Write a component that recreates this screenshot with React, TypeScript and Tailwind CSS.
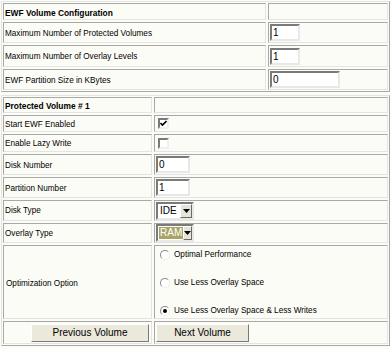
import React from 'react';

const cell = 'border border-t-[#a8a8a8] border-l-[#a8a8a8] border-b-[#e4e4e4] border-r-[#e4e4e4]';
const label = 'flex items-center pl-[1px] pt-[3px]';

const TextBox = ({ value, w }: { value: string; w: string }) => (
  <div
    className={`${w} h-[17px] bg-white border-2 border-t-[#7a7a7a] border-l-[#7a7a7a] border-b-[#e8e8e8] border-r-[#e8e8e8] flex items-center pl-[1px] text-[10px]`}
  >
    {value}
  </div>
);

const Select = ({ value, highlight }: { value: string; highlight?: boolean }) => (
  <div className="w-[38px] h-[18px] bg-white border-2 border-t-[#7a7a7a] border-l-[#7a7a7a] border-b-[#e8e8e8] border-r-[#e8e8e8] flex items-stretch">
    <div className="flex-1 flex items-center pl-[1px]">
      <span className={`text-[10px] leading-[12px] px-[1px] ${highlight ? 'bg-[#a9a465] text-white' : ''}`}>{value}</span>
    </div>
    <div className="w-[12px] bg-[#e6e3da] border border-t-white border-l-white border-b-[#6a6a6a] border-r-[#6a6a6a] flex items-center justify-center">
      <svg width="7" height="4" viewBox="0 0 7 4">
        <path d="M0 0 H7 L3.5 4 Z" fill="#000" />
      </svg>
    </div>
  </div>
);

const Radio = ({ checked }: { checked?: boolean }) => (
  <div className="w-[10px] h-[10px] rounded-full bg-white border border-t-[#8a8a8a] border-l-[#8a8a8a] border-b-[#ececec] border-r-[#ececec] flex items-center justify-center">
    {checked && <div className="w-[4px] h-[4px] rounded-full bg-black" />}
  </div>
);

const Check = ({ checked }: { checked?: boolean }) => (
  <div className="w-[11px] h-[11px] bg-white border-2 border-t-[#7a7a7a] border-l-[#7a7a7a] border-b-[#f0f0f0] border-r-[#f0f0f0] flex items-center justify-center">
    {checked && (
      <svg width="7" height="7" viewBox="0 0 7 7">
        <path d="M0.5 3 L2.5 5 L6.5 1" stroke="#000" strokeWidth="1.6" fill="none" />
      </svg>
    )}
  </div>
);

const Btn = ({ label, w }: { label: string; w: string }) => (
  <div
    className={`${w} h-[18px] bg-[#ebe8dc] border border-t-white border-l-white border-b-[#7a7a7a] border-r-[#7a7a7a] flex items-center justify-center text-[10px]`}
  >
    {label}
  </div>
);

export default function App() {
  return (
    <div className="w-[391px] h-[349px] bg-[#fcfcf7] font-['Liberation_Sans',Arial,sans-serif] text-[8.2px] text-black overflow-hidden pt-[1px] px-[1px]">
      {/* EWF Volume Configuration */}
      <div className="border border-t-[#e4e4e4] border-l-[#e4e4e4] border-b-[#a8a8a8] border-r-[#a8a8a8] grid grid-cols-[263px_1fr] gap-[2px] p-[1px]">
        <div className={`${cell} h-[17px] flex items-center pl-[1px] pt-[4px] font-bold text-[8.4px]`}>EWF Volume Configuration</div>
        <div className={`${cell} h-[17px]`} />
        <div className={`${cell} h-[21px] ${label}`}>Maximum Number of Protected Volumes</div>
        <div className={`${cell} h-[21px] flex items-center pl-[1px]`}>
          <TextBox value="1" w="w-[30px]" />
        </div>
        <div className={`${cell} h-[22px] ${label}`}>Maximum Number of Overlay Levels</div>
        <div className={`${cell} h-[22px] flex items-center pl-[1px]`}>
          <TextBox value="1" w="w-[30px]" />
        </div>
        <div className={`${cell} h-[21px] ${label}`}>EWF Partition Size in KBytes</div>
        <div className={`${cell} h-[21px] flex items-center pl-[1px]`}>
          <TextBox value="0" w="w-[70px]" />
        </div>
      </div>

      {/* Protected Volume */}
      <div className="mt-[3px] border border-t-[#e4e4e4] border-l-[#e4e4e4] border-b-[#a8a8a8] border-r-[#a8a8a8] grid grid-cols-[149px_1fr] gap-[2px] p-[1px]">
        <div className={`${cell} h-[16px] flex items-center pl-[1px] pt-[2px] font-bold text-[8.4px]`}>Protected Volume # 1</div>
        <div className={`${cell} h-[16px]`} />
        <div className={`${cell} h-[17px] ${label}`}>Start EWF Enabled</div>
        <div className={`${cell} h-[17px] flex items-center pl-[3px]`}>
          <Check checked />
        </div>
        <div className={`${cell} h-[18px] flex items-center pl-[1px] pt-[2px]`}>Enable Lazy Write</div>
        <div className={`${cell} h-[18px] flex items-center pl-[3px]`}>
          <Check />
        </div>
        <div className={`${cell} h-[21px] ${label}`}>Disk Number</div>
        <div className={`${cell} h-[21px] flex items-center pl-[1px]`}>
          <TextBox value="0" w="w-[34px]" />
        </div>
        <div className={`${cell} h-[21px] ${label}`}>Partition Number</div>
        <div className={`${cell} h-[21px] flex items-center pl-[1px]`}>
          <TextBox value="1" w="w-[34px]" />
        </div>
        <div className={`${cell} h-[21px] flex items-center pl-[1px] pt-[2px]`}>Disk Type</div>
        <div className={`${cell} h-[21px] flex items-center pl-[1px]`}>
          <Select value="IDE" />
        </div>
        <div className={`${cell} h-[20px] ${label}`}>Overlay Type</div>
        <div className={`${cell} h-[20px] flex items-center pl-[1px]`}>
          <Select value="RAM" highlight />
        </div>
        <div className={`${cell} h-[74px] flex items-center pl-[2px] pt-[5px]`}>Optimization Option</div>
        <div className={`${cell} h-[74px] flex flex-col justify-between pt-[3px] pb-[1px] pl-[5px]`}>
          <div className="flex items-center gap-[4px]">
            <Radio />
            <span>Optimal Performance</span>
          </div>
          <div className="flex items-center gap-[4px]">
            <Radio />
            <span>Use Less Overlay Space</span>
          </div>
          <div className="flex items-center gap-[4px]">
            <Radio checked />
            <span>Use Less Overlay Space &amp; Less Writes</span>
          </div>
        </div>
        <div className={`${cell} h-[23px] flex items-center justify-end pr-[2px]`}>
          <Btn label="Previous Volume" w="w-[118px]" />
        </div>
        <div className={`${cell} h-[23px] flex items-center pl-[1px]`}>
          <Btn label="Next Volume" w="w-[93px]" />
        </div>
      </div>
    </div>
  );
}
